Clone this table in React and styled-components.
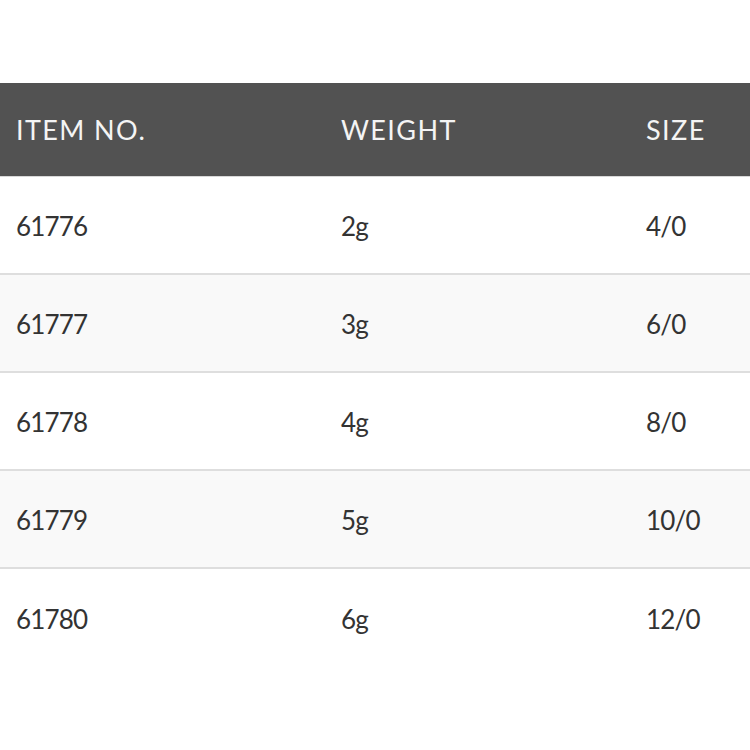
import styled, { createGlobalStyle } from 'styled-components';

const rows = [
  { item: '61776', weight: '2g', size: '4/0' },
  { item: '61777', weight: '3g', size: '6/0' },
  { item: '61778', weight: '4g', size: '8/0' },
  { item: '61779', weight: '5g', size: '10/0' },
  { item: '61780', weight: '6g', size: '12/0' },
];

function App() {
  return (
    <>
      <GlobalStyle />
      <Page>
        <Table>
          <HeadRow>
            <HeadCell>ITEM NO.</HeadCell>
            <HeadCell>WEIGHT</HeadCell>
            <HeadCell>SIZE</HeadCell>
          </HeadRow>
          {rows.map((r, i) => (
            <Row key={r.item} shaded={i % 2 === 1} last={i === rows.length - 1}>
              <Cell>{r.item}</Cell>
              <Cell>{r.weight}</Cell>
              <Cell>{r.size}</Cell>
            </Row>
          ))}
        </Table>
      </Page>
    </>
  );
}

export default App;

const GlobalStyle = createGlobalStyle`
  body {
    margin: 0;
    background: #ffffff;
    font-family: Lato, 'Open Sans', sans-serif;
  }
`;

const Page = styled.div`
  width: 750px;
  height: 750px;
  padding-top: 83px;
  box-sizing: border-box;
  overflow: hidden;
`;

const Table = styled.div`
  width: 820px;
`;

const HeadRow = styled.div`
  display: grid;
  grid-template-columns: 325px 305px 1fr;
  align-items: center;
  height: 94px;
  background: #525252;
  color: #f4f4f4;
  border-bottom: 1px solid #d8d8d8;
  box-sizing: border-box;
`;

const Row = styled.div`
  display: grid;
  grid-template-columns: 325px 305px 1fr;
  align-items: center;
  height: 98px;
  padding-top: 2px;
  box-sizing: border-box;
  background: ${props => (props.shaded ? '#f9f9f9' : '#ffffff')};
  border-bottom: ${props => (props.last ? 'none' : '2px solid #dedede')};
  color: #333333;
`;

const Cell = styled.div`
  padding-left: 16px;
  font-size: 26px;
  letter-spacing: -0.8px;
`;

const HeadCell = styled(Cell)`
  font-size: 27px;
  letter-spacing: 1.4px;
`;
